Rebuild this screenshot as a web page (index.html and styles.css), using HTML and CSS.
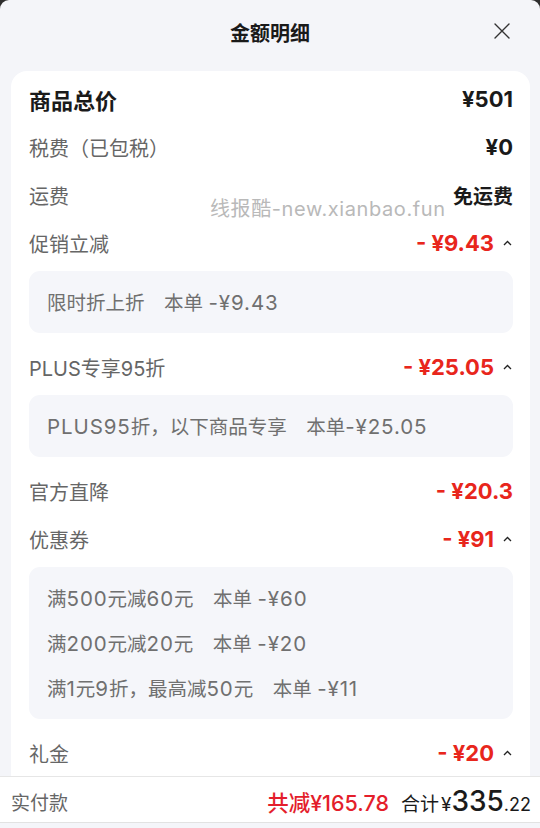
FILE: index.html
```html
<!DOCTYPE html>
<html lang="zh-CN">
<head>
<meta charset="utf-8">
<title>金额明细</title>
<link rel="stylesheet" href="styles.css">
</head>
<body>
<div class="sheet">
  <header class="top">
    <span></span>
    <h1 class="title">金额明细</h1>
    <button class="close" aria-label="关闭">
      <svg width="16" height="16" viewBox="0 0 16 16"><path d="M1 1 L15 15 M15 1 L1 15" stroke="#333" stroke-width="1.4" fill="none" stroke-linecap="round"/></svg>
    </button>
  </header>
  <main class="scroll">
    <section class="card">
      <div class="watermark">线报酷-new.xianbao.fun</div>
      <div class="row">
        <span class="label strong">商品总价</span>
        <span class="amt big">¥501</span>
      </div>
      <div class="row">
        <span class="label">税费（已包税）</span>
        <span class="amt big">¥0</span>
      </div>
      <div class="row">
        <span class="label">运费</span>
        <span class="amt">免运费</span>
      </div>
      <div class="row">
        <span class="label">促销立减</span>
        <span class="amt red">- ¥9.43<svg class="caret" width="9" height="6" viewBox="0 0 9 6"><path d="M1 5 L4.5 1.5 L8 5" stroke="#222" stroke-width="1.3" fill="none"/></svg></span>
      </div>
      <div class="detail">
        <p>限时折上折　本单 <span class="num">-¥9.43</span></p>
      </div>
      <div class="row">
        <span class="label">PLUS专享95折</span>
        <span class="amt red">- ¥25.05<svg class="caret" width="9" height="6" viewBox="0 0 9 6"><path d="M1 5 L4.5 1.5 L8 5" stroke="#222" stroke-width="1.3" fill="none"/></svg></span>
      </div>
      <div class="detail">
        <p><span class="num">PLUS95</span>折，以下商品专享　本单<span class="num">-¥25.05</span></p>
      </div>
      <div class="row">
        <span class="label">官方直降</span>
        <span class="amt red">- ¥20.3</span>
      </div>
      <div class="row">
        <span class="label">优惠券</span>
        <span class="amt red">- ¥91<svg class="caret" width="9" height="6" viewBox="0 0 9 6"><path d="M1 5 L4.5 1.5 L8 5" stroke="#222" stroke-width="1.3" fill="none"/></svg></span>
      </div>
      <div class="detail">
        <p>满<span class="num">500</span>元减<span class="num">60</span>元　本单 <span class="num">-¥60</span></p>
        <p>满<span class="num">200</span>元减<span class="num">20</span>元　本单 <span class="num">-¥20</span></p>
        <p>满<span class="num">1</span>元<span class="num">9</span>折，最高减<span class="num">50</span>元　本单 <span class="num">-¥11</span></p>
      </div>
      <div class="row">
        <span class="label">礼金</span>
        <span class="amt red">- ¥20<svg class="caret" width="9" height="6" viewBox="0 0 9 6"><path d="M1 5 L4.5 1.5 L8 5" stroke="#222" stroke-width="1.3" fill="none"/></svg></span>
      </div>
    </section>
  </main>
  <footer class="bar">
    <span class="pay">实付款</span>
    <div class="sum">
      <span class="saved">共减¥165.78</span>
      <span class="total-label">合计</span>
      <span class="cur">¥</span><span class="int">335</span><span class="dec">.22</span>
    </div>
  </footer>
</div>
</body>
</html>
```

FILE: styles.css
```css
* { box-sizing: border-box; }

html, body {
  margin: 0;
  padding: 0;
  background: #2e2e2e;
}

body {
  font-family: Inter, "Noto Sans CJK SC", sans-serif;
  color: #1a1a1a;
}

.sheet {
  width: 540px;
  height: 828px;
  background: #f4f5f9;
  border-radius: 9px 9px 0 0;
  display: flex;
  flex-direction: column;
  overflow: hidden;
}

.top {
  height: 71px;
  flex: none;
  display: grid;
  grid-template-columns: 1fr auto 1fr;
}

.title {
  margin: 0;
  font-size: 20px;
  font-weight: 700;
  line-height: 68px;
  color: #1a1a1a;
}

.close {
  justify-self: end;
  align-self: start;
  margin: 23px 30px 0 0;
  padding: 0;
  border: 0;
  background: none;
  width: 16px;
  height: 16px;
  display: flex;
}

.scroll {
  flex: 1;
  overflow: hidden;
}

.card {
  position: relative;
  margin: 0 10px 0 11px;
  background: #fff;
  border-radius: 16px 16px 0 0;
  padding: 4px 17px 20px 18px;
}

.watermark {
  position: absolute;
  left: 199px;
  top: 125px;
  font-size: 20px;
  line-height: 26px;
  letter-spacing: 0.6px;
  color: #b9b9b9;
  white-space: nowrap;
}

.row {
  height: 48px;
  display: flex;
  justify-content: space-between;
  align-items: center;
}

.label {
  font-size: 20px;
  color: #666;
}

.label.strong {
  font-size: 22px;
  font-weight: 700;
  color: #1a1a1a;
}

.amt {
  display: flex;
  align-items: center;
  font-size: 20px;
  font-weight: 700;
  color: #1a1a1a;
  white-space: pre;
}

.amt.big {
  font-size: 22px;
}

.amt.red {
  font-size: 22px;
  color: #e8261c;
}

.caret {
  margin-left: 9px;
  margin-right: 1px;
}

.detail {
  margin: 4px 0 10px;
  padding: 10px 18px 7px;
  background: #f5f6fa;
  border-radius: 11px;
}

.detail p {
  margin: 0;
  height: 45px;
  font-size: 19.5px;
  line-height: 45px;
  color: #707070;
  white-space: pre;
}

.num {
  font-size: 20.5px;
  line-height: 1;
  letter-spacing: 0.9px;
}

.bar {
  flex: none;
  height: 47px;
  margin-bottom: 5px;
  background: #fff;
  border-top: 1px solid #e6e6e6;
  border-bottom: 1px solid #e2e2e2;
  display: flex;
  justify-content: space-between;
  align-items: center;
  padding: 3px 9px 0 11px;
}

.pay {
  font-size: 19px;
  color: #666;
}

.sum {
  display: flex;
  align-items: baseline;
}

.saved {
  font-size: 21.5px;
  font-weight: 500;
  color: #e41e2b;
  margin-right: 12px;
}

.total-label {
  font-size: 19px;
  color: #1a1a1a;
  margin-right: 2px;
}

.cur {
  font-size: 19px;
  color: #1a1a1a;
}

.int {
  font-size: 28px;
  font-weight: 500;
  color: #1a1a1a;
}

.dec {
  font-size: 18px;
  color: #1a1a1a;
}
```
